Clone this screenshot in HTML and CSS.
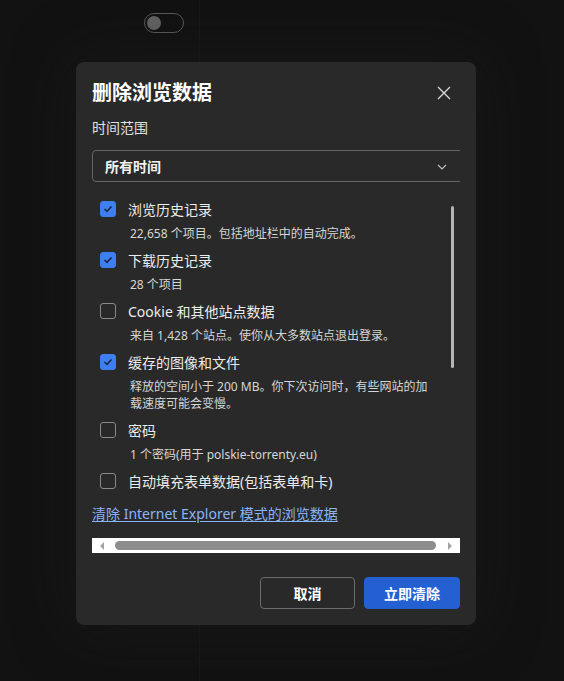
FILE: index.html
```html
<!DOCTYPE html>
<html lang="zh-CN">
<head>
<meta charset="utf-8">
<link rel="stylesheet" href="styles.css">
</head>
<body>
<div class="page">
  <div class="side">
    <div class="toggle"><span class="knob"></span></div>
  </div>
  <div class="main"></div>
</div>

<div class="dialog">
  <div class="header">
    <h1 class="title">删除浏览数据</h1>
    <svg class="close" width="16" height="16" viewBox="0 0 16 16"><path d="M2 2 L14 14 M14 2 L2 14" stroke="#dcdcdc" stroke-width="1.3" fill="none"/></svg>
  </div>
  <div class="range-label">时间范围</div>
  <div class="select-wrap">
    <div class="select">
      <span class="select-text">所有时间</span>
      <svg class="chev" width="10" height="6" viewBox="0 0 10 6"><path d="M1 1 L5 5 L9 1" stroke="#bdbdbd" stroke-width="1.2" fill="none"/></svg>
    </div>
  </div>

  <div class="list">
    <div class="item">
      <div class="row"><span class="cb on"><svg width="10" height="8" viewBox="0 0 10 8"><path d="M1.5 4 L4 6.3 L8.5 1.5" stroke="#1a2744" stroke-width="1.6" fill="none"/></svg></span><span class="label">浏览历史记录</span></div>
      <div class="desc">22,658 个项目。包括地址栏中的自动完成。</div>
    </div>
    <div class="item">
      <div class="row"><span class="cb on"><svg width="10" height="8" viewBox="0 0 10 8"><path d="M1.5 4 L4 6.3 L8.5 1.5" stroke="#1a2744" stroke-width="1.6" fill="none"/></svg></span><span class="label">下载历史记录</span></div>
      <div class="desc">28 个项目</div>
    </div>
    <div class="item">
      <div class="row"><span class="cb"></span><span class="label">Cookie 和其他站点数据</span></div>
      <div class="desc">来自 1,428 个站点。使你从大多数站点退出登录。</div>
    </div>
    <div class="item">
      <div class="row"><span class="cb on"><svg width="10" height="8" viewBox="0 0 10 8"><path d="M1.5 4 L4 6.3 L8.5 1.5" stroke="#1a2744" stroke-width="1.6" fill="none"/></svg></span><span class="label">缓存的图像和文件</span></div>
      <div class="desc">释放的空间小于 200 MB。你下次访问时，有些网站的加<br>载速度可能会变慢。</div>
    </div>
    <div class="item">
      <div class="row"><span class="cb"></span><span class="label">密码</span></div>
      <div class="desc">1 个密码(用于 polskie-torrenty.eu)</div>
    </div>
    <div class="item">
      <div class="row"><span class="cb"></span><span class="label">自动填充表单数据(包括表单和卡)</span></div>
    </div>
    <div class="vscroll"></div>
  </div>

  <a class="ie-link" href="#">清除 Internet Explorer 模式的浏览数据</a>

  <div class="hscroll">
    <span class="arrow left"></span>
    <span class="thumb"></span>
    <span class="arrow right"></span>
  </div>

  <div class="footer">
    <button class="btn cancel">取消</button>
    <button class="btn primary">立即清除</button>
  </div>
</div>
</body>
</html>
```

FILE: styles.css
```css
* { box-sizing: border-box; }
html, body {
  margin: 0;
  padding: 0;
  width: 564px;
  height: 681px;
  overflow: hidden;
  background: #121212;
  font-family: "Noto Sans", "Noto Sans CJK SC", sans-serif;
  color: #e6e6e6;
}
.page {
  display: flex;
  height: 681px;
}
.side {
  width: 200px;
  border-right: 1px solid #171717;
  padding: 13px 0 0 144px;
}
.toggle {
  width: 40px;
  height: 20px;
  border: 1px solid #5a5a5a;
  border-radius: 10px;
  display: flex;
  align-items: center;
  padding-left: 2px;
}
.knob {
  width: 14px;
  height: 14px;
  border-radius: 50%;
  background: #626262;
}
.main { flex: 1; }

.dialog {
  position: absolute;
  left: 76px;
  top: 62px;
  width: 400px;
  height: 563px;
  background: #292929;
  border-radius: 8px;
  padding: 17px 16px 16px 16px;
  display: flex;
  flex-direction: column;
  box-shadow: 0 0 60px rgba(30, 30, 30, 0.5);
}
.header {
  display: flex;
  justify-content: space-between;
  align-items: center;
  height: 28px;
}
.title {
  margin: 0;
  font-size: 20px;
  line-height: 28px;
  font-weight: 700;
  color: #ffffff;
}
.close { margin-right: 8px; }
.range-label {
  margin-top: 11px;
  font-size: 14px;
  line-height: 20px;
  color: #e0e0e0;
}
.select-wrap {
  margin-top: 12px;
  overflow: hidden;
  width: 368px;
}
.select {
  width: 380px;
  height: 32px;
  border: 1px solid #656565;
  border-radius: 4px;
  display: flex;
  align-items: center;
  padding-left: 12px;
  position: relative;
}
.select-text {
  font-size: 14px;
  font-weight: 700;
  color: #f2f2f2;
}
.chev {
  position: absolute;
  left: 344px;
  top: 13px;
}

.list {
  position: relative;
  margin-top: 13px;
  height: 303px;
  padding: 3px 0 0 8px;
  overflow: hidden;
}
.item { margin-bottom: 7px; }
.row {
  display: flex;
  align-items: center;
  height: 22px;
}
.cb {
  width: 16px;
  height: 16px;
  border: 1px solid #8a8a8a;
  border-radius: 3px;
  display: flex;
  align-items: center;
  justify-content: center;
  margin-right: 12px;
  flex: none;
}
.cb.on {
  background: #3d7ff0;
  border-color: #3d7ff0;
}
.label {
  font-size: 14px;
  color: #ececec;
  white-space: nowrap;
}
.desc {
  margin-top: 5px;
  padding-left: 30px;
  font-size: 12px;
  line-height: 17px;
  color: #d6d6d6;
  white-space: nowrap;
}
.vscroll {
  position: absolute;
  left: 359px;
  top: 11px;
  width: 3px;
  height: 162px;
  background: #b5b5b5;
  border-radius: 2px;
}

.ie-link {
  margin-top: 6px;
  font-size: 14px;
  line-height: 20px;
  color: #8ab4f8;
  text-decoration: underline;
  text-underline-offset: 2px;
  align-self: flex-start;
}

.hscroll {
  margin-top: 14px;
  width: 368px;
  height: 15px;
  background: #ffffff;
  display: flex;
  align-items: center;
  padding: 0 8px 0 8px;
}
.arrow {
  width: 0;
  height: 0;
  border-top: 4px solid transparent;
  border-bottom: 4px solid transparent;
  flex: none;
}
.arrow.left { border-right: 4px solid #a3a3a3; }
.arrow.right { border-left: 4px solid #a3a3a3; margin-left: 12px; }
.thumb {
  margin-left: 11px;
  width: 321px;
  height: 9px;
  border-radius: 5px;
  background: #8d8d8d;
}

.footer {
  margin-top: 24px;
  display: flex;
  justify-content: flex-end;
  gap: 9px;
}
.btn {
  height: 32px;
  border-radius: 4px;
  font-family: "Noto Sans", "Noto Sans CJK SC", sans-serif;
  font-size: 14px;
  font-weight: 700;
  color: #ffffff;
  padding: 0;
}
.cancel {
  width: 95px;
  background: transparent;
  border: 1px solid #6b6b6b;
}
.primary {
  width: 96px;
  background: #2560d3;
  border: 1px solid #2560d3;
}
```
